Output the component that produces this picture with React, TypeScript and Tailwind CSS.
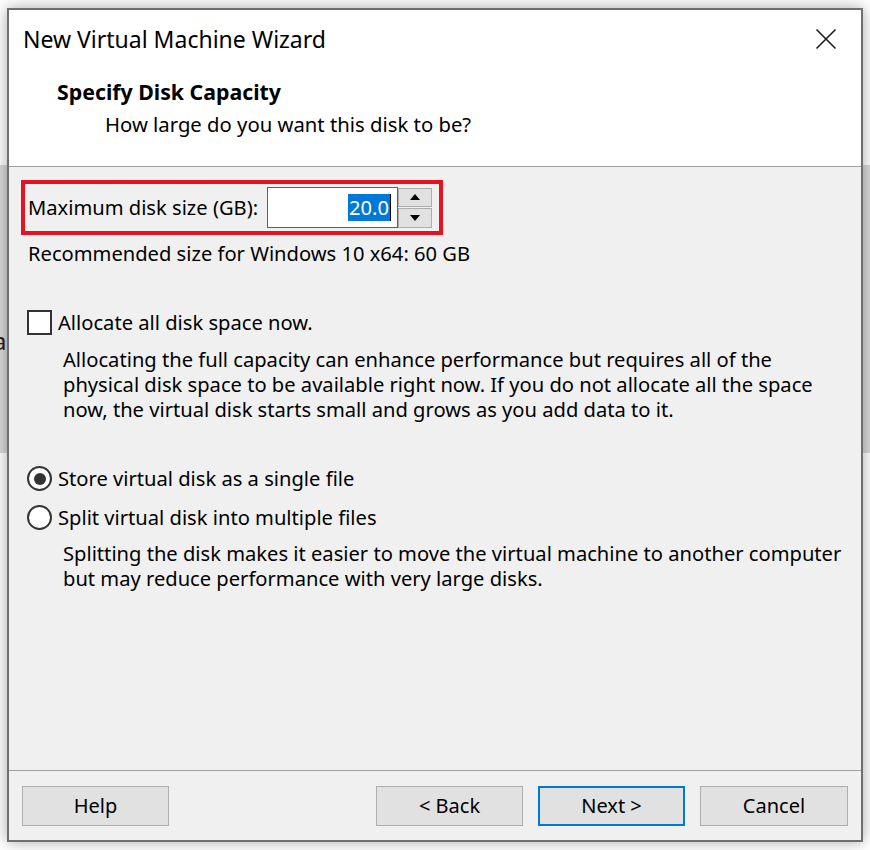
import React from 'react';

const FONT = { fontFamily: '"Segoe UI", "Noto Sans", "Open Sans", sans-serif' };

function CloseIcon(): React.JSX.Element {
  return (
    <svg width="22" height="22" viewBox="0 0 22 22" aria-hidden="true">
      <path d="M1.5 1.5 L20.5 20.5 M20.5 1.5 L1.5 20.5" stroke="#1b1b1b" strokeWidth="1.6" fill="none" />
    </svg>
  );
}

function Spinner(): React.JSX.Element {
  return (
    <div className="flex flex-col w-[34px] h-[40px] gap-[1px]">
      <button type="button" className="flex-1 flex items-center justify-center bg-[#e1e1e1] border border-[#adadad]">
        <svg width="10" height="6" viewBox="0 0 10 6" aria-hidden="true">
          <path d="M0 6 L5 0 L10 6 Z" fill="#000" />
        </svg>
      </button>
      <button type="button" className="flex-1 flex items-center justify-center bg-[#e1e1e1] border border-[#adadad]">
        <svg width="10" height="6" viewBox="0 0 10 6" aria-hidden="true">
          <path d="M0 0 L10 0 L5 6 Z" fill="#000" />
        </svg>
      </button>
    </div>
  );
}

type WizButtonProps = { label: string; primary?: boolean; wide?: boolean };

function WizButton({ label, primary, wide }: WizButtonProps): React.JSX.Element {
  return (
    <button
      type="button"
      className={[
        'h-[40px] bg-[#e1e1e1] text-[20px] text-black',
        wide ? 'w-[148px]' : 'w-[147px]',
        primary ? 'border-2 border-[#0078d7]' : 'border border-[#adadad]',
      ].join(' ')}
    >
      {label}
    </button>
  );
}

function Radio({ checked }: { checked?: boolean }): React.JSX.Element {
  return (
    <span className="w-[25px] h-[25px] rounded-full border-2 border-[#333] bg-white flex items-center justify-center shrink-0">
      {checked && <span className="w-[12px] h-[12px] rounded-full bg-[#333]" />}
    </span>
  );
}

export default function App(): React.JSX.Element {
  return (
    <div className="relative w-[870px] h-[850px] bg-white overflow-hidden text-black" style={FONT}>
      {/* desktop behind the dialog */}
      <div className="flex flex-col">
        <div className="h-[165px] bg-white" />
        <div className="h-[288px] bg-[#d9d9d9] overflow-hidden">
          <div className="mt-[164px] ml-[-7px] text-[24px] leading-[24px] text-[#222]">a</div>
        </div>
      </div>

      {/* dialog window */}
      <div className="absolute left-[7px] top-[8px] w-[856px] h-[834px] border-2 border-[#6f6f6f] flex flex-col bg-[#f0f0f0] shadow-[0_0_14px_rgba(0,0,0,0.35)]">
        {/* header */}
        <div className="h-[157px] bg-white border-b border-[#a0a0a0] flex flex-col">
          <div className="h-[58px] flex items-center justify-between pl-[14px] pr-[24px]">
            <span className="text-[23px]">New Virtual Machine Wizard</span>
            <CloseIcon />
          </div>
          <div className="mt-[8px] pl-[48px] h-[32px] leading-[32px] text-[21.3px] font-bold">Specify Disk Capacity</div>
          <div className="pl-[96px] h-[32px] leading-[32px] text-[20.3px]">How large do you want this disk to be?</div>
        </div>

        {/* body */}
        <div className="h-[604px] border-b border-[#a0a0a0] flex flex-col pl-[12px] text-[20.15px]">
          <div className="mt-[13px] w-[422px] h-[55px] border-4 border-[#e81123] flex items-center pl-[3px] pr-[7px]">
            <span className="flex-1">Maximum disk size (GB):</span>
            <div className="w-[131px] h-[41px] border border-[#0078d7] bg-white flex items-center justify-end pr-[6px]">
              <span className="bg-[#0078d7] text-white leading-[27px] px-[1px]">20.0</span>
              <span className="w-[1px] h-[27px] bg-black" />
            </div>
            <Spinner />
          </div>

          <div className="pl-[7px] h-[36px] leading-[36px]">Recommended size for Windows 10 x64: 60 GB</div>

          <label className="mt-[33px] h-[36px] flex items-center gap-[6px] pl-[6px]">
            <span className="w-[25px] h-[25px] border-2 border-[#333] bg-white shrink-0" />
            <span>Allocate all disk space now.</span>
          </label>
          <p className="mt-[7px] pl-[42px] leading-[25px]">
            Allocating the full capacity can enhance performance but requires all of the
            <br />
            physical disk space to be available right now. If you do not allocate all the space
            <br />
            now, the virtual disk starts small and grows as you add data to it.
          </p>

          <label className="mt-[37px] h-[39px] flex items-center gap-[6px] pl-[6px]">
            <Radio checked />
            <span>Store virtual disk as a single file</span>
          </label>
          <label className="h-[39px] flex items-center gap-[6px] pl-[6px]">
            <Radio />
            <span>Split virtual disk into multiple files</span>
          </label>
          <p className="mt-[4px] pl-[42px] leading-[25px]">
            Splitting the disk makes it easier to move the virtual machine to another computer
            <br />
            but may reduce performance with very large disks.
          </p>
        </div>

        {/* footer */}
        <div className="flex-1 flex items-center justify-between px-[13px]">
          <WizButton label="Help" />
          <div className="flex gap-[15px]">
            <WizButton label="< Back" />
            <WizButton label="Next >" primary />
            <WizButton label="Cancel" wide />
          </div>
        </div>
      </div>
    </div>
  );
}
